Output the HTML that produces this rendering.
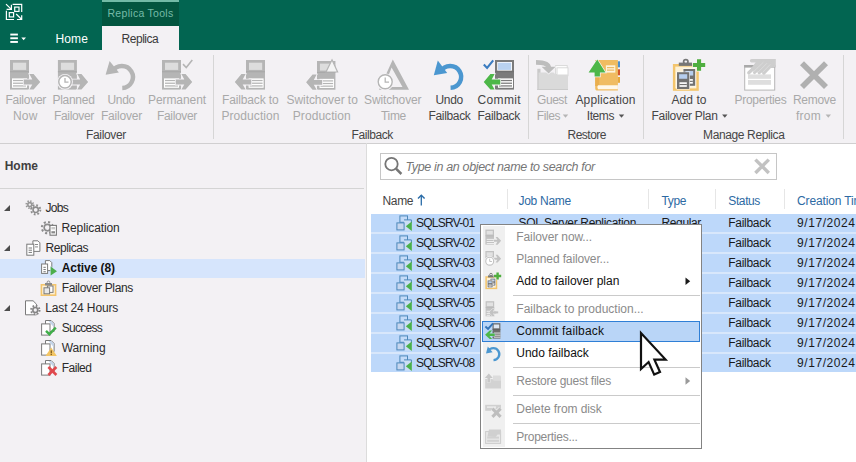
<!DOCTYPE html>
<html><head><meta charset="utf-8"><title>Replicas</title>
<style>
html,body{margin:0;padding:0}
body{width:856px;height:462px;overflow:hidden;position:relative;background:#fff;font-family:"Liberation Sans",sans-serif}
.t{position:absolute;white-space:pre;line-height:16px;height:16px}
.a{position:absolute}
svg{position:absolute;overflow:visible}
</style></head><body>
<!-- top bar -->
<div class="a" style="left:0;top:0;width:856px;height:50px;background:#026551"></div>
<div class="a" style="left:102px;top:0;width:77px;height:26px;background:#03553f"></div>
<div class="a" style="left:102px;top:0;width:77px;height:2px;background:#73baa6"></div>
<div class="a" style="left:102px;top:26px;width:77px;height:24px;background:#f3f1f4"></div>
<!-- ribbon -->
<div class="a" style="left:0;top:50px;width:856px;height:93px;background:#f3f1f4"></div>
<div class="a" style="left:0;top:143px;width:856px;height:1px;background:#d0cfd0"></div>
<div class="a" style="left:213px;top:55px;width:1px;height:84px;background:#d6d6d6"></div>
<div class="a" style="left:528px;top:55px;width:1px;height:84px;background:#d6d6d6"></div>
<div class="a" style="left:643px;top:55px;width:1px;height:84px;background:#d6d6d6"></div>
<div class="a" style="left:843px;top:55px;width:1px;height:84px;background:#d6d6d6"></div>
<!-- left panel -->
<div class="a" style="left:0;top:144px;width:366px;height:318px;background:#f3f1f4"></div>
<div class="a" style="left:366px;top:143px;width:1px;height:319px;background:#dcdcdc"></div>
<div class="a" style="left:0;top:188px;width:364px;height:1px;background:#d4d4d4"></div>
<div class="a" style="left:0;top:258.5px;width:365px;height:19px;background:#d6e5fc"></div>
<!-- search -->
<div class="a" style="left:380px;top:153px;width:397px;height:27px;border:1px solid #c6c6c6;box-sizing:border-box;background:#fff"></div>
<!-- header seps -->
<div class="a" style="left:507px;top:189px;width:1px;height:20px;background:#e6e6e6"></div>
<div class="a" style="left:648px;top:189px;width:1px;height:20px;background:#e6e6e6"></div>
<div class="a" style="left:715px;top:189px;width:1px;height:20px;background:#e6e6e6"></div>
<div class="a" style="left:784px;top:189px;width:1px;height:20px;background:#e6e6e6"></div>
<!-- rows -->
<div class="a" style="left:371px;top:213.6px;width:485px;height:158.7px;background:#d8e7fb"></div>
<div class="a" style="left:371px;top:213.6px;width:485px;height:18.7px;background:#bdd8fa"></div>
<div class="a" style="left:371px;top:233.6px;width:485px;height:18.7px;background:#bdd8fa"></div>
<div class="a" style="left:371px;top:253.6px;width:485px;height:18.7px;background:#bdd8fa"></div>
<div class="a" style="left:371px;top:273.6px;width:485px;height:18.7px;background:#bdd8fa"></div>
<div class="a" style="left:371px;top:293.6px;width:485px;height:18.7px;background:#bdd8fa"></div>
<div class="a" style="left:371px;top:313.6px;width:485px;height:18.7px;background:#bdd8fa"></div>
<div class="a" style="left:371px;top:333.6px;width:485px;height:18.7px;background:#bdd8fa"></div>
<div class="a" style="left:371px;top:353.6px;width:485px;height:18.7px;background:#bdd8fa"></div>

<!-- menu -->
<div class="a" style="left:480px;top:224px;width:222px;height:225px;background:#ffffff;border:1px solid #838383;box-sizing:border-box;z-index:10"></div>
<div class="a" style="left:483px;top:226px;width:22px;height:221px;background:#f0f0f0;z-index:11"></div>
<div class="a" style="left:513px;top:295px;width:187px;height:1px;background:#cacaca;z-index:12"></div>
<div class="a" style="left:513px;top:367px;width:187px;height:1px;background:#cacaca;z-index:12"></div>
<div class="a" style="left:513px;top:395px;width:187px;height:1px;background:#cacaca;z-index:12"></div>
<div class="a" style="left:513px;top:423px;width:187px;height:1px;background:#cacaca;z-index:12"></div>
<div class="a" style="left:482px;top:320.5px;width:218px;height:21.5px;background:#b9d5f7;border:1px solid #2f7fd6;box-sizing:border-box;z-index:13"></div>
<svg width="856" height="462" style="left:0;top:0;z-index:5" viewBox="0 0 856 462"><path d="M6 4.1 L11.4 9.4 M6.6 9.4 L11.4 9.4 L11.4 4.8" stroke="#ffffff" stroke-width="1.2" fill="none"/>
<path d="M12.6 4.4 L21.7 4.4 L21.7 12" stroke="#ffffff" stroke-width="1.2" fill="none"/>
<rect x="14.7" y="7.1" width="4.3" height="4.3" stroke="#ffffff" stroke-width="1.2" fill="none"/>
<rect x="9.3" y="12.6" width="4.3" height="4.3" stroke="#ffffff" stroke-width="1.2" fill="none"/>
<path d="M6.4 10.8 L6.4 19.5 L14 19.5" stroke="#ffffff" stroke-width="1.2" fill="none"/>
<path d="M16.2 14 L21.7 19.5 M21.7 15.2 L21.7 19.5 L16.9 19.5" stroke="#ffffff" stroke-width="1.2" fill="none"/>
<rect x="10.3" y="33.6" width="7.6" height="1.9" fill="#ffffff" />
<rect x="10.3" y="37.3" width="7.6" height="1.9" fill="#ffffff" />
<rect x="10.3" y="41" width="7.6" height="1.9" fill="#ffffff" />
<polygon points="21.3,37.4 26,37.4 23.65,40.2" fill="#ffffff" /><rect x="10" y="60" width="19" height="29.6" fill="#b5b5b5" /><rect x="13" y="62.7" width="13.2" height="7.2" fill="#dddddd" /><rect x="10" y="71.3" width="19" height="0.9" fill="#a6a6a6" /><rect x="12" y="78.4" width="15" height="9.4" fill="#ffffff" /><rect x="13" y="79.9" width="13" height="1.25" fill="#b5b5b5" /><rect x="13" y="82.6" width="13" height="1.25" fill="#b5b5b5" /><rect x="13" y="85.3" width="13" height="1.25" fill="#b5b5b5" />
<polygon points="23.75,79.6 32.3,79.6 29.4,74 33.6,74 40.25,81.9 33.6,89.6 29.4,89.6 32.3,84.6 23.75,84.6" fill="#b5b5b5" stroke="#f5f3f6" stroke-width="1.6" paint-order="stroke"/>
<rect x="57.9" y="60" width="19" height="29.6" fill="#b5b5b5" /><rect x="60.9" y="62.7" width="13.2" height="7.2" fill="#dddddd" /><rect x="57.9" y="71.3" width="19" height="0.9" fill="#a6a6a6" />
<polygon points="71.65,79.6 80.2,79.6 77.3,74 81.5,74 88.15,81.9 81.5,89.6 77.3,89.6 80.2,84.6 71.65,84.6" fill="#b5b5b5" stroke="#f5f3f6" stroke-width="1.6" paint-order="stroke"/>
<circle cx="65" cy="81.8" r="7.9" fill="#f5f3f6" /><circle cx="65" cy="81.8" r="6.25" fill="#ffffff" stroke="#b5b5b5" stroke-width="1.5"/><polyline points="65,77.95 65,82.1 68.5,82.1" fill="none" stroke="#b5b5b5" stroke-width="1.35"/>
<path d="M112.37 71.5 A11 11 0 1 1 122.28 87.99" fill="none" stroke="#b5b5b5" stroke-width="4.5"/><polygon points="105.6,74.8 109.6,60.9 118.9,72.6" fill="#b5b5b5" />
<rect x="162" y="60" width="19" height="29.6" fill="#b5b5b5" /><rect x="165" y="62.7" width="13.2" height="7.2" fill="#dddddd" /><rect x="162" y="71.3" width="19" height="0.9" fill="#a6a6a6" /><rect x="164" y="78.4" width="15" height="9.4" fill="#ffffff" /><rect x="165" y="79.9" width="13" height="1.25" fill="#b5b5b5" /><rect x="165" y="82.6" width="13" height="1.25" fill="#b5b5b5" /><rect x="165" y="85.3" width="13" height="1.25" fill="#b5b5b5" />
<polygon points="175.75,79.6 184.3,79.6 181.4,74 185.6,74 192.25,81.9 185.6,89.6 181.4,89.6 184.3,84.6 175.75,84.6" fill="#b5b5b5" stroke="#f5f3f6" stroke-width="1.6" paint-order="stroke"/>
<polyline points="183,64.12 186.25,67.5 192.3,60" fill="none" stroke="#b5b5b5" stroke-width="1.6"/>
<rect x="246" y="60" width="19" height="29.6" fill="#b5b5b5" /><rect x="249" y="62.7" width="13.2" height="7.2" fill="#dddddd" /><rect x="246" y="71.3" width="19" height="0.9" fill="#a6a6a6" /><rect x="248.6" y="78.4" width="15" height="9.4" fill="#ffffff" /><rect x="249.6" y="79.9" width="13" height="1.25" fill="#b5b5b5" /><rect x="249.6" y="82.6" width="13" height="1.25" fill="#b5b5b5" /><rect x="249.6" y="85.3" width="13" height="1.25" fill="#b5b5b5" />
<polygon points="251.25,79.6 242.7,79.6 245.6,74 241.4,74 234.75,81.9 241.4,89.6 245.6,89.6 242.7,84.6 251.25,84.6" fill="#b5b5b5" stroke="#f5f3f6" stroke-width="1.6" paint-order="stroke"/>
<rect x="317" y="61" width="18.43" height="28.71" fill="#b5b5b5" /><rect x="319.91" y="63.62" width="12.8" height="6.98" fill="#dddddd" /><rect x="317" y="71.96" width="18.43" height="0.87" fill="#a6a6a6" /><rect x="319.52" y="78.85" width="14.55" height="9.12" fill="#ffffff" /><rect x="320.49" y="80.3" width="12.61" height="1.21" fill="#b5b5b5" /><rect x="320.49" y="82.92" width="12.61" height="1.21" fill="#b5b5b5" /><rect x="320.49" y="85.54" width="12.61" height="1.21" fill="#b5b5b5" />
<polygon points="322.09,80.01 313.8,80.01 316.61,74.58 312.54,74.58 306.09,82.24 312.54,89.71 316.61,89.71 313.8,84.86 322.09,84.86" fill="#b5b5b5" stroke="#f5f3f6" stroke-width="1.55" paint-order="stroke"/>
<polygon points="332,59.8 337.6,72 326,72" fill="#f4f4f4" stroke="#b5b5b5" stroke-width="1.2"/>
<path d="M392.8 59.6 L409 89.8 L379 89.8 Z M391.6 67.5 L384 87 L402.5 87 Z" fill="#b5b5b5" fill-rule="evenodd"/>
<circle cx="385.2" cy="81.8" r="8.6" fill="#f5f3f6" /><circle cx="385.2" cy="81.8" r="7" fill="#ffffff" stroke="#b5b5b5" stroke-width="1.4"/><polyline points="385.2,77.56 385.2,82.1 389.05,82.1" fill="none" stroke="#b5b5b5" stroke-width="1.26"/>
<path d="M440.76 71.45 A10.9 10.9 0 1 1 450.58 87.79" fill="none" stroke="#4b97d0" stroke-width="4.5"/><polygon points="433.8,75.2 437.8,60.4 447.2,73" fill="#4b97d0" />
<rect x="495" y="60" width="19" height="29.6" fill="#7b7b7b" /><rect x="497.2" y="62" width="14.8" height="8.6" fill="#ffffff" /><rect x="498" y="62.7" width="13.2" height="7.2" fill="#b9d2f0" /><rect x="495" y="71.3" width="19" height="0.9" fill="#6d6d6d" /><rect x="498" y="78.4" width="15" height="9.4" fill="#ffffff" /><rect x="499" y="79.9" width="13" height="1.25" fill="#7b7b7b" /><rect x="499" y="82.6" width="13" height="1.25" fill="#7b7b7b" /><rect x="499" y="85.3" width="13" height="1.25" fill="#7b7b7b" />
<polygon points="500.25,79.6 491.7,79.6 494.6,74 490.4,74 483.75,81.9 490.4,89.6 494.6,89.6 491.7,84.6 500.25,84.6" fill="#4db748" stroke="#f5f3f6" stroke-width="1.6" paint-order="stroke"/>
<polyline points="483.8,64.58 487.09,68 493.2,60.4" fill="none" stroke="#3b7cc0" stroke-width="2.1"/>
<rect x="555.6" y="65.6" width="11.6" height="9" fill="#ffffff" stroke="#d6d6d6" stroke-width="0.9"/>
<rect x="557" y="67.8" width="11" height="8" fill="#ffffff" stroke="#d6d6d6" stroke-width="0.9"/>
<rect x="537.3" y="68.8" width="3.2" height="21.2" fill="#c9c9c9" />
<path d="M538.6 72.6 L553.5 72.6 L555.5 74.4 L568 74.4 L568 90 L538.6 90 Z" fill="#dadada" />
<rect x="537.3" y="89" width="30.7" height="1" fill="#cbcbcb" />
<path d="M536 62.4 C545 62.4 548.7 64.6 548.7 69" fill="none" stroke="#f5f3f6" stroke-width="6.4"/>
<polygon points="541.6,66.8 555.6,66.8 548.6,73.6" fill="#bdbdbd" stroke="#f5f3f6" stroke-width="1.2" paint-order="stroke"/>
<path d="M536 62.4 C545 62.4 548.7 64.6 548.7 68" fill="none" stroke="#bdbdbd" stroke-width="4.8"/>
<rect x="617.4" y="61.3" width="2.6" height="6" fill="#4a90d0" />
<rect x="617.4" y="69.3" width="2.6" height="6" fill="#d4572a" />
<rect x="617.4" y="77" width="2.6" height="5.8" fill="#e7a93c" />
<path d="M598 60 L617.9 60 L617.9 90.6 L597.5 90.6 Q595.2 90.6 595.2 88 L595.2 62.5 Q595.2 60 598 60 Z" fill="#f0bc62" />
<rect x="595.2" y="60" width="4" height="26" fill="#e9ae4e" />
<path d="M598 85.3 L617.9 85.3 L617.9 89.3 L598 89.3 Q596.4 87.3 598 85.3 Z" fill="#fff8ea" />
<rect x="605.9" y="65.3" width="9.4" height="7.3" fill="#fdf3dc" />
<rect x="607" y="67.2" width="7.2" height="1" fill="#e9ae4e" />
<rect x="607" y="69.6" width="7.2" height="1" fill="#e9ae4e" />
<polygon points="597.25,59.6 605.5,72.6 599.9,72.6 599.9,76.6 594.6,76.6 594.6,72.6 588.6,72.6" fill="#4db748" stroke="#f5f3f6" stroke-width="1.5" paint-order="stroke"/>
<rect x="672.9" y="64" width="25.9" height="26.8" fill="#f3c56d" />
<rect x="675.3" y="66.6" width="21.1" height="21.8" fill="#fdf1d6" />
<circle cx="685.8" cy="61.8" r="2.2" fill="none" stroke="#777" stroke-width="1.7"/>
<rect x="678.8" y="62.6" width="13.2" height="3.3" fill="#777" />
<rect x="683.4" y="69" width="11.8" height="16.8" fill="#727272" stroke="#ffffff" stroke-width="1" paint-order="stroke"/><rect x="685.41" y="71.02" width="7.79" height="4.54" fill="#b6ceee" /><rect x="685.76" y="79.08" width="7.08" height="4.54" fill="#ffffff" /><rect x="685.76" y="80.76" width="7.08" height="1.18" fill="#727272" />
<rect x="677" y="72.2" width="12.3" height="16.8" fill="#727272" stroke="#ffffff" stroke-width="1" paint-order="stroke"/><rect x="679.09" y="74.22" width="8.12" height="4.54" fill="#b6ceee" /><rect x="679.46" y="82.28" width="7.38" height="4.54" fill="#ffffff" /><rect x="679.46" y="83.96" width="7.38" height="1.18" fill="#727272" />
<polygon points="697,59.3 701.1,59.3 701.1,63 705.2,63 705.2,67.1 701.1,67.1 701.1,70.8 697,70.8 697,67.1 692.9,67.1 692.9,63 697,63" fill="#4fae3f" stroke="#f5f3f6" stroke-width="1.4" paint-order="stroke"/>
<rect x="744.7" y="65.5" width="30" height="24.6" fill="#ffffff" stroke="#b6b6b6" stroke-width="1"/>
<rect x="744.2" y="65" width="31" height="2.6" fill="#a9a9a9" />
<rect x="748" y="74.4" width="23" height="4.4" fill="#dedede" />
<rect x="748" y="80" width="23" height="4.8" fill="#dedede" />
<path d="M758 59.1 L775.8 59.1 L775.8 67.2 L769.5 67.2 L764 73 L750 70 Z" fill="#cecece" />
<line x1="751.6" y1="60.8" x2="770" y2="60.8" stroke="#cecece" stroke-width="3.4" stroke-linecap="round"/>
<line x1="761" y1="61.5" x2="748.8" y2="72.8" stroke="#cecece" stroke-width="3.3" stroke-linecap="round"/>
<line x1="765" y1="62.6" x2="754.6" y2="72.4" stroke="#cecece" stroke-width="3.3" stroke-linecap="round"/>
<line x1="768.4" y1="63.6" x2="759.2" y2="72.6" stroke="#cecece" stroke-width="3.3" stroke-linecap="round"/>
<line x1="771.4" y1="65" x2="763.8" y2="73" stroke="#cecece" stroke-width="3.3" stroke-linecap="round"/>
<line x1="763.4" y1="62.2" x2="753" y2="72.2" stroke="#dedede" stroke-width="0.8" />
<line x1="767" y1="63.2" x2="758" y2="72.2" stroke="#dedede" stroke-width="0.8" />
<line x1="770.2" y1="64.4" x2="762.6" y2="72.4" stroke="#dedede" stroke-width="0.8" />
<line x1="802" y1="63.2" x2="826" y2="87" stroke="#b0b0b0" stroke-width="5.6" />
<line x1="826" y1="63.2" x2="802" y2="87" stroke="#b0b0b0" stroke-width="5.6" />
<polygon points="562.8,114.5 568.2,114.5 565.5,117.7" fill="#b5b5b5" />
<polygon points="618.8,114.5 624.2,114.5 621.5,117.7" fill="#555" />
<polygon points="722.1,114.5 727.5,114.5 724.8,117.7" fill="#555" />
<polygon points="825.6,114.5 831,114.5 828.3,117.7" fill="#b5b5b5" /><polygon points="10,205 10,211 4,211" fill="#4c4c4c" />
<polygon points="10,245 10,251 4,251" fill="#4c4c4c" />
<polygon points="10,305 10,311 4,311" fill="#4c4c4c" />
<circle cx="29.8" cy="204.6" r="3.4" fill="none" stroke="#969696" stroke-width="2" stroke-dasharray="1.28 1.39"/><circle cx="29.8" cy="204.6" r="1.97" fill="none" stroke="#969696" stroke-width="1.6"/>
<circle cx="35.7" cy="209.8" r="4.6" fill="none" stroke="#8c8c8c" stroke-width="2" stroke-dasharray="1.73 1.88"/><circle cx="35.7" cy="209.8" r="2.67" fill="none" stroke="#8c8c8c" stroke-width="1.6"/>
<circle cx="47.4" cy="227.6" r="5.6" fill="none" stroke="#8c8c8c" stroke-width="2" stroke-dasharray="2.11 2.29"/><circle cx="47.4" cy="227.6" r="3.25" fill="none" stroke="#8c8c8c" stroke-width="1.6"/>
<rect x="50" y="225.4" width="6.4" height="9.8" fill="#ffffff" stroke="#7a7a7a" stroke-width="1.1"/>
<rect x="51.4" y="227" width="3.6" height="2.4" fill="#c9c9c9" />
<rect x="51.4" y="231.2" width="3.6" height="2.2" fill="#8a8a8a" />
<path d="M32.9 240.8 L37.9 240.8 L39.9 242.8 L39.9 251.4 L32.9 251.4 Z" fill="#ffffff" stroke="#7a7a7a" stroke-width="1"/>
<rect x="35" y="244" width="3" height="1" fill="#8a8a8a" />
<rect x="35" y="246.4" width="3" height="1" fill="#8a8a8a" />
<rect x="26.8" y="244.2" width="7" height="11" fill="#ffffff" stroke="#7a7a7a" stroke-width="1"/><rect x="28.6" y="247.5" width="3.4" height="1" fill="#7a7a7a" /><rect x="28.6" y="249.7" width="3.4" height="1" fill="#7a7a7a" /><rect x="28.6" y="251.9" width="3.4" height="1" fill="#7a7a7a" />
<path d="M45.4 260.6 L49.8 260.6 L51.8 262.6 L51.8 270.6 L45.4 270.6 Z" fill="#ffffff" stroke="#7a7a7a" stroke-width="1"/>
<rect x="41.6" y="264" width="6" height="9.4" fill="#ffffff" stroke="#7a7a7a" stroke-width="1"/><rect x="43.4" y="266.82" width="2.4" height="1" fill="#7a7a7a" /><rect x="43.4" y="269.02" width="2.4" height="1" fill="#7a7a7a" /><rect x="43.4" y="271.22" width="2.4" height="1" fill="#7a7a7a" />
<polygon points="50.6,266.6 57,271.2 50.6,275.6" fill="#4cae4c" stroke="#d6e5fc" stroke-width="0.8" paint-order="stroke"/>
<rect x="41.4" y="284.8" width="14.2" height="10.4" fill="#fdf1d8" stroke="#f3c56d" stroke-width="1.6"/>
<rect x="45" y="283" width="7" height="2.4" fill="#8a8a8a" />
<circle cx="48.5" cy="282.4" r="1.4" fill="none" stroke="#8a8a8a" stroke-width="1"/>
<rect x="47.4" y="286" width="5.6" height="6.4" fill="#ffffff" stroke="#7a7a7a" stroke-width="1"/>
<rect x="44" y="287.8" width="5.6" height="6" fill="#e8e8e8" stroke="#7a7a7a" stroke-width="1"/>
<path d="M25.5 300.8 L33.1 300.8 L36.5 304.2 L36.5 314.8 L25.5 314.8 Z" fill="#ffffff" stroke="#7a7a7a" stroke-width="1"/>
<circle cx="35.3" cy="310" r="4.6" fill="#f3f1f4" />
<circle cx="35.3" cy="310" r="4.2" fill="none" stroke="#858585" stroke-width="2" stroke-dasharray="1.58 1.72"/><circle cx="35.3" cy="310" r="2.44" fill="none" stroke="#858585" stroke-width="1.6"/>
<path d="M45.5 320.5 L51.1 320.5 L54.1 323.5 L54.1 331.5 L45.5 331.5 Z" fill="#ffffff" stroke="#7a7a7a" stroke-width="1"/>
<polygon points="48.5,321 51.2,321 53.6,323.5 53.6,327" fill="#c3d5ea" />
<rect x="41.6" y="323.9" width="8.4" height="11.2" fill="#ffffff" stroke="#7a7a7a" stroke-width="1"/>
<path d="M45.5 340.5 L51.1 340.5 L54.1 343.5 L54.1 351.5 L45.5 351.5 Z" fill="#ffffff" stroke="#7a7a7a" stroke-width="1"/>
<polygon points="48.5,341 51.2,341 53.6,343.5 53.6,347" fill="#c3d5ea" />
<rect x="41.6" y="343.9" width="8.4" height="11.2" fill="#ffffff" stroke="#7a7a7a" stroke-width="1"/>
<path d="M45.5 360.5 L51.1 360.5 L54.1 363.5 L54.1 371.5 L45.5 371.5 Z" fill="#ffffff" stroke="#7a7a7a" stroke-width="1"/>
<polygon points="48.5,361 51.2,361 53.6,363.5 53.6,367" fill="#c3d5ea" />
<rect x="41.6" y="363.9" width="8.4" height="11.2" fill="#ffffff" stroke="#7a7a7a" stroke-width="1"/>
<polyline points="46,330.8 49.4,334.2 55.8,327.6" fill="none" stroke="#3fae49" stroke-width="2.4"/>
<polygon points="51.2,347.6 56.9,356 45.5,356" fill="#f2c565" />
<rect x="50.7" y="350.4" width="1.1" height="3" fill="#6b4a10" />
<rect x="50.7" y="354" width="1.1" height="1.1" fill="#6b4a10" />
<line x1="48.4" y1="367" x2="56.4" y2="375" stroke="#e0484d" stroke-width="2.5" />
<line x1="56.4" y1="367" x2="48.4" y2="375" stroke="#e0484d" stroke-width="2.5" /><circle cx="391.5" cy="164.1" r="6.2" fill="none" stroke="#767676" stroke-width="1.8"/>
<line x1="396" y1="168.7" x2="401.4" y2="174" stroke="#767676" stroke-width="2.5" />
<line x1="755.4" y1="159.6" x2="768.8" y2="173" stroke="#c2c2c2" stroke-width="3.4" />
<line x1="768.8" y1="159.6" x2="755.4" y2="173" stroke="#c2c2c2" stroke-width="3.4" />
<line x1="421.3" y1="195.6" x2="421.3" y2="205.5" stroke="#2a6ca8" stroke-width="1.3" />
<polyline points="418,198.6 421.3,195.2 424.6,198.6" fill="none" stroke="#2a6ca8" stroke-width="1.4"/>
<rect x="399.9" y="215.9" width="7.6" height="6.4" fill="#c4dbf8" stroke="#4d88ba" stroke-width="1"/>
<rect x="404" y="219.9" width="7.6" height="10.6" fill="#cbdef5" />
<path d="M404 219.9 L411.4 219.9 L411.4 223" fill="none" stroke="#4d88ba" stroke-width="1"/>
<rect x="396.9" y="222.9" width="7.2" height="7" fill="#c6d6ee" stroke="#4d88ba" stroke-width="1"/>
<polygon points="411.8,221.4 411.8,230.9 405.8,226.2" fill="#4bb04a" />
<rect x="399.9" y="235.9" width="7.6" height="6.4" fill="#c4dbf8" stroke="#4d88ba" stroke-width="1"/>
<rect x="404" y="239.9" width="7.6" height="10.6" fill="#cbdef5" />
<path d="M404 239.9 L411.4 239.9 L411.4 243" fill="none" stroke="#4d88ba" stroke-width="1"/>
<rect x="396.9" y="242.9" width="7.2" height="7" fill="#c6d6ee" stroke="#4d88ba" stroke-width="1"/>
<polygon points="411.8,241.4 411.8,250.9 405.8,246.2" fill="#4bb04a" />
<rect x="399.9" y="255.9" width="7.6" height="6.4" fill="#c4dbf8" stroke="#4d88ba" stroke-width="1"/>
<rect x="404" y="259.9" width="7.6" height="10.6" fill="#cbdef5" />
<path d="M404 259.9 L411.4 259.9 L411.4 263" fill="none" stroke="#4d88ba" stroke-width="1"/>
<rect x="396.9" y="262.9" width="7.2" height="7" fill="#c6d6ee" stroke="#4d88ba" stroke-width="1"/>
<polygon points="411.8,261.4 411.8,270.9 405.8,266.2" fill="#4bb04a" />
<rect x="399.9" y="275.9" width="7.6" height="6.4" fill="#c4dbf8" stroke="#4d88ba" stroke-width="1"/>
<rect x="404" y="279.9" width="7.6" height="10.6" fill="#cbdef5" />
<path d="M404 279.9 L411.4 279.9 L411.4 283" fill="none" stroke="#4d88ba" stroke-width="1"/>
<rect x="396.9" y="282.9" width="7.2" height="7" fill="#c6d6ee" stroke="#4d88ba" stroke-width="1"/>
<polygon points="411.8,281.4 411.8,290.9 405.8,286.2" fill="#4bb04a" />
<rect x="399.9" y="295.9" width="7.6" height="6.4" fill="#c4dbf8" stroke="#4d88ba" stroke-width="1"/>
<rect x="404" y="299.9" width="7.6" height="10.6" fill="#cbdef5" />
<path d="M404 299.9 L411.4 299.9 L411.4 303" fill="none" stroke="#4d88ba" stroke-width="1"/>
<rect x="396.9" y="302.9" width="7.2" height="7" fill="#c6d6ee" stroke="#4d88ba" stroke-width="1"/>
<polygon points="411.8,301.4 411.8,310.9 405.8,306.2" fill="#4bb04a" />
<rect x="399.9" y="315.9" width="7.6" height="6.4" fill="#c4dbf8" stroke="#4d88ba" stroke-width="1"/>
<rect x="404" y="319.9" width="7.6" height="10.6" fill="#cbdef5" />
<path d="M404 319.9 L411.4 319.9 L411.4 323" fill="none" stroke="#4d88ba" stroke-width="1"/>
<rect x="396.9" y="322.9" width="7.2" height="7" fill="#c6d6ee" stroke="#4d88ba" stroke-width="1"/>
<polygon points="411.8,321.4 411.8,330.9 405.8,326.2" fill="#4bb04a" />
<rect x="399.9" y="335.9" width="7.6" height="6.4" fill="#c4dbf8" stroke="#4d88ba" stroke-width="1"/>
<rect x="404" y="339.9" width="7.6" height="10.6" fill="#cbdef5" />
<path d="M404 339.9 L411.4 339.9 L411.4 343" fill="none" stroke="#4d88ba" stroke-width="1"/>
<rect x="396.9" y="342.9" width="7.2" height="7" fill="#c6d6ee" stroke="#4d88ba" stroke-width="1"/>
<polygon points="411.8,341.4 411.8,350.9 405.8,346.2" fill="#4bb04a" />
<rect x="399.9" y="355.9" width="7.6" height="6.4" fill="#c4dbf8" stroke="#4d88ba" stroke-width="1"/>
<rect x="404" y="359.9" width="7.6" height="10.6" fill="#cbdef5" />
<path d="M404 359.9 L411.4 359.9 L411.4 363" fill="none" stroke="#4d88ba" stroke-width="1"/>
<rect x="396.9" y="362.9" width="7.2" height="7" fill="#c6d6ee" stroke="#4d88ba" stroke-width="1"/>
<polygon points="411.8,361.4 411.8,370.9 405.8,366.2" fill="#4bb04a" /></svg>
<svg width="856" height="462" style="left:0;top:0;z-index:15" viewBox="0 0 856 462"><rect x="485.4" y="229.6" width="8.6" height="15" fill="#c2c2c2" /><rect x="486.6" y="230.9" width="6.2" height="3.6" fill="#e2e2e2" /><rect x="485.4" y="235.5" width="8.6" height="0.7" fill="#b6b6b6" /><rect x="486.7" y="238.9" width="7.3" height="0.9" fill="#f4f4f4" /><rect x="486.7" y="241" width="7.3" height="0.9" fill="#f4f4f4" /><rect x="486.7" y="243" width="7.3" height="0.9" fill="#f4f4f4" />
<polygon points="494,239.8 497.4,239.8 495.6,236.9 497.6,236.9 501.1,240.8 497.6,244.7 495.6,244.7 497.4,241.8 494,241.8" fill="#c2c2c2" stroke="#f0f0f0" stroke-width="0.9" paint-order="stroke"/>
<rect x="485.4" y="251" width="8.6" height="11.5" fill="#c2c2c2" /><rect x="486.6" y="252.3" width="6.2" height="3.6" fill="#e2e2e2" /><rect x="485.4" y="256.9" width="8.6" height="0.7" fill="#b6b6b6" />
<polygon points="494,257.7 497.4,257.7 495.6,254.8 497.6,254.8 501.1,258.7 497.6,262.6 495.6,262.6 497.4,259.7 494,259.7" fill="#c2c2c2" stroke="#f0f0f0" stroke-width="0.9" paint-order="stroke"/>
<circle cx="489.7" cy="261.2" r="5.4" fill="#f0f0f0" /><circle cx="489.7" cy="261.2" r="3.95" fill="#ffffff" stroke="#c2c2c2" stroke-width="1.1"/><polyline points="489.7,258.72 489.7,261.5 491.95,261.5" fill="none" stroke="#c2c2c2" stroke-width="0.99"/>
<rect x="486.1" y="277" width="10.4" height="11.4" fill="#fdf1d6" stroke="#f3c56d" stroke-width="1.5"/>
<rect x="488" y="275.4" width="6.2" height="2" fill="#777" />
<circle cx="491" cy="274.6" r="1.3" fill="none" stroke="#777" stroke-width="0.9"/>
<rect x="490.4" y="278.6" width="5" height="7" fill="#727272" stroke="#ffffff" stroke-width="1" paint-order="stroke"/><rect x="491.25" y="279.44" width="3.3" height="1.89" fill="#b6ceee" /><rect x="491.4" y="282.8" width="3" height="1.89" fill="#ffffff" /><rect x="491.4" y="283.5" width="3" height="0.49" fill="#727272" />
<rect x="487.6" y="280.4" width="5" height="7" fill="#727272" stroke="#ffffff" stroke-width="1" paint-order="stroke"/><rect x="488.45" y="281.24" width="3.3" height="1.89" fill="#b6ceee" /><rect x="488.6" y="284.6" width="3" height="1.89" fill="#ffffff" /><rect x="488.6" y="285.3" width="3" height="0.49" fill="#727272" />
<polygon points="496.4,272.4 498.8,272.4 498.8,274.8 501.2,274.8 501.2,277.2 498.8,277.2 498.8,279.6 496.4,279.6 496.4,277.2 494,277.2 494,274.8 496.4,274.8" fill="#4fae3f" stroke="#f0f0f0" stroke-width="0.8" paint-order="stroke"/>
<rect x="485.6" y="301.2" width="8.6" height="15.1" fill="#c2c2c2" /><rect x="486.8" y="302.5" width="6.2" height="3.6" fill="#e2e2e2" /><rect x="485.6" y="307.1" width="8.6" height="0.7" fill="#b6b6b6" />
<rect x="486.6" y="310.8" width="3.4" height="0.9" fill="#f4f4f4" />
<rect x="486.6" y="312.9" width="3.4" height="0.9" fill="#f4f4f4" />
<rect x="486.6" y="314.8" width="3.4" height="0.9" fill="#f4f4f4" />
<polygon points="496.3,311.4 492.9,311.4 494.7,308.5 492.7,308.5 489.2,312.4 492.7,316.3 494.7,316.3 492.9,313.4 496.3,313.4" fill="#c2c2c2" stroke="#f0f0f0" stroke-width="0.9" paint-order="stroke"/>
<rect x="494" y="311.4" width="4.2" height="2" fill="#c2c2c2" />
<rect x="492.5" y="323.2" width="7.9" height="15.4" fill="#6e6e6e" />
<rect x="493.7" y="324.5" width="5.5" height="3.8" fill="#dce6f3" />
<rect x="492.5" y="329.4" width="7.9" height="0.7" fill="#5c5c5c" />
<rect x="494" y="332.6" width="6.4" height="0.9" fill="#f2f2f2" />
<rect x="494" y="334.7" width="6.4" height="0.9" fill="#f2f2f2" />
<rect x="494" y="336.7" width="6.4" height="0.9" fill="#f2f2f2" />
<polygon points="485.1,334.8 489.7,330.6 492.1,330.6 489.5,333.5 494.7,333.5 494.7,336.1 489.5,336.1 492.1,339 489.7,339" fill="#4db748" stroke="#b9d5f7" stroke-width="0.8" paint-order="stroke"/>
<polyline points="485.4,326.48 488.06,329 493,323.4" fill="none" stroke="#3474b7" stroke-width="1.9"/>
<path d="M488.1 351.2 A6 6 0 1 1 493.51 360.2" fill="none" stroke="#4b97d0" stroke-width="2.3"/><polygon points="486,353.6 487.8,346.4 492.6,352.2" fill="#4b97d0" />
<path d="M493 375.6 L500.4 375.6 L501 376.4 L501 380 L493 380 Z" fill="#dcdcdc" />
<path d="M485.2 379 L492.4 379 L493.6 380.2 L501 380.2 L501 388.6 L485.2 388.6 Z" fill="#d2d2d2" />
<polygon points="488.8,373.4 492.8,378 490.2,378 490.2,382.4 487.4,382.4 487.4,378 484.8,378" fill="#c8c8c8" stroke="#f0f0f0" stroke-width="0.9" paint-order="stroke"/>
<rect x="485.2" y="404.8" width="15.8" height="6" fill="#d0d0d0" />
<rect x="487" y="406.4" width="9" height="1.4" fill="#efefef" />
<line x1="492.4" y1="408.6" x2="500.6" y2="416.8" stroke="#f0f0f0" stroke-width="4.6" />
<line x1="500.6" y1="408.6" x2="492.4" y2="416.8" stroke="#f0f0f0" stroke-width="4.6" />
<line x1="492.4" y1="408.6" x2="500.6" y2="416.8" stroke="#bebebe" stroke-width="3.1" />
<line x1="500.6" y1="408.6" x2="492.4" y2="416.8" stroke="#bebebe" stroke-width="3.1" />
<rect x="485.6" y="431.6" width="15" height="11.8" fill="#e9e9e9" stroke="#cdcdcd" stroke-width="1"/>
<rect x="487.2" y="436.6" width="11.8" height="2" fill="#d2d2d2" />
<rect x="487.2" y="439.8" width="11.8" height="2" fill="#d2d2d2" />
<path d="M489 429.6 L501 429.6 L501 434.4 L497.6 434.4 L495.6 437 L487.4 436.6 Z" fill="#d0d0d0" />
<polygon points="685.5,277.5 685.5,285.1 690.2,281.3" fill="#1a1a1a" />
<polygon points="685.5,377.2 685.5,384.8 690.2,381" fill="#9a9a9a" />
<path d="M641 333 L641 369 L648.6 362 L654.2 374.6 L660 372 L654.4 359.6 L665.6 359.6 Z" fill="#ffffff" stroke="#111" stroke-width="2.2" stroke-linejoin="miter"/></svg>
<span class="t" style="left:107.5px;top:5.1px;font-size:10.5px;color:#76bba8;letter-spacing:0.29px;">Replica Tools</span>
<span class="t" style="left:55.5px;top:31.0px;font-size:12px;color:#ffffff;letter-spacing:0.12px;">Home</span>
<span class="t" style="left:121.5px;top:31.0px;font-size:12px;color:#3a3a3a;letter-spacing:-0.46px;">Replica</span>
<span class="t" style="left:5.5px;top:92.0px;font-size:12px;color:#a9a9a9;letter-spacing:-0.27px;">Failover</span>
<span class="t" style="left:13.0px;top:107.6px;font-size:12px;color:#a9a9a9;letter-spacing:0.16px;">Now</span>
<span class="t" style="left:52.5px;top:92.0px;font-size:12px;color:#a9a9a9;letter-spacing:-0.29px;">Planned</span>
<span class="t" style="left:54.0px;top:107.6px;font-size:12px;color:#a9a9a9;letter-spacing:-0.34px;">Failover</span>
<span class="t" style="left:107.5px;top:92.0px;font-size:12px;color:#a9a9a9;letter-spacing:-0.30px;">Undo</span>
<span class="t" style="left:101.0px;top:107.6px;font-size:12px;color:#a9a9a9;letter-spacing:-0.21px;">Failover</span>
<span class="t" style="left:148.0px;top:92.0px;font-size:12px;color:#a9a9a9;letter-spacing:-0.08px;">Permanent</span>
<span class="t" style="left:157.0px;top:107.6px;font-size:12px;color:#a9a9a9;letter-spacing:-0.34px;">Failover</span>
<span class="t" style="left:86.0px;top:127.0px;font-size:12px;color:#464646;letter-spacing:-0.34px;">Failover</span>
<span class="t" style="left:222.0px;top:92.0px;font-size:12px;color:#a9a9a9;letter-spacing:-0.14px;">Failback to</span>
<span class="t" style="left:221.5px;top:107.6px;font-size:12px;color:#a9a9a9;letter-spacing:0.06px;">Production</span>
<span class="t" style="left:286.5px;top:92.0px;font-size:12px;color:#a9a9a9;letter-spacing:-0.06px;">Switchover to</span>
<span class="t" style="left:292.8px;top:107.6px;font-size:12px;color:#a9a9a9;letter-spacing:0.06px;">Production</span>
<span class="t" style="left:364.0px;top:92.0px;font-size:12px;color:#a9a9a9;letter-spacing:-0.12px;">Switchover</span>
<span class="t" style="left:381.0px;top:107.6px;font-size:12px;color:#a9a9a9;letter-spacing:-0.31px;">Time</span>
<span class="t" style="left:351.5px;top:127.0px;font-size:12px;color:#464646;letter-spacing:-0.42px;">Failback</span>
<span class="t" style="left:435.5px;top:92.0px;font-size:12px;color:#464646;letter-spacing:-0.30px;">Undo</span>
<span class="t" style="left:428.5px;top:107.6px;font-size:12px;color:#464646;letter-spacing:-0.34px;">Failback</span>
<span class="t" style="left:477.5px;top:92.0px;font-size:12px;color:#464646;letter-spacing:0.36px;">Commit</span>
<span class="t" style="left:477.5px;top:107.6px;font-size:12px;color:#464646;letter-spacing:-0.27px;">Failback</span>
<span class="t" style="left:537.0px;top:92.0px;font-size:12px;color:#a9a9a9;letter-spacing:-0.44px;">Guest</span>
<span class="t" style="left:536.8px;top:107.6px;font-size:12px;color:#a9a9a9;letter-spacing:-0.43px;">Files</span>
<span class="t" style="left:575.5px;top:92.0px;font-size:12px;color:#464646;letter-spacing:0.12px;">Application</span>
<span class="t" style="left:586.8px;top:107.6px;font-size:12px;color:#464646;letter-spacing:-0.43px;">Items</span>
<span class="t" style="left:567.5px;top:127.0px;font-size:12px;color:#464646;letter-spacing:-0.50px;">Restore</span>
<span class="t" style="left:671.5px;top:92.0px;font-size:12px;color:#464646;letter-spacing:0.05px;">Add to</span>
<span class="t" style="left:651.5px;top:107.6px;font-size:12px;color:#464646;letter-spacing:-0.31px;">Failover Plan</span>
<span class="t" style="left:734.5px;top:92.0px;font-size:12px;color:#a9a9a9;letter-spacing:-0.27px;">Properties</span>
<span class="t" style="left:793.0px;top:92.0px;font-size:12px;color:#a9a9a9;letter-spacing:-0.31px;">Remove</span>
<span class="t" style="left:796.0px;top:107.6px;font-size:12px;color:#a9a9a9;letter-spacing:0.25px;">from</span>
<span class="t" style="left:703.0px;top:127.0px;font-size:12px;color:#464646;letter-spacing:-0.37px;">Manage Replica</span>
<span class="t" style="left:4.7px;top:157.8px;font-size:12px;color:#404040;letter-spacing:-0.01px;font-weight:700;">Home</span>
<span class="t" style="left:45.5px;top:199.8px;font-size:12px;color:#2b2b2b;letter-spacing:-0.71px;">Jobs</span>
<span class="t" style="left:61.5px;top:219.8px;font-size:12px;color:#2b2b2b;letter-spacing:-0.12px;">Replication</span>
<span class="t" style="left:45.5px;top:239.8px;font-size:12px;color:#2b2b2b;letter-spacing:-0.44px;">Replicas</span>
<span class="t" style="left:61.7px;top:259.8px;font-size:12px;color:#111;letter-spacing:-0.07px;font-weight:700;">Active (8)</span>
<span class="t" style="left:61.7px;top:279.8px;font-size:12px;color:#2b2b2b;letter-spacing:-0.34px;">Failover Plans</span>
<span class="t" style="left:45.2px;top:299.8px;font-size:12px;color:#2b2b2b;letter-spacing:-0.13px;">Last 24 Hours</span>
<span class="t" style="left:61.7px;top:319.8px;font-size:12px;color:#2b2b2b;letter-spacing:-0.72px;">Success</span>
<span class="t" style="left:61.7px;top:339.8px;font-size:12px;color:#2b2b2b;letter-spacing:-0.06px;">Warning</span>
<span class="t" style="left:61.7px;top:359.8px;font-size:12px;color:#2b2b2b;letter-spacing:-0.48px;">Failed</span>
<span class="t" style="left:405.5px;top:158.7px;font-size:12.5px;color:#767676;letter-spacing:-0.35px;font-style:italic;">Type in an object name to search for</span>
<span class="t" style="left:382.6px;top:192.6px;font-size:12px;color:#444;letter-spacing:-0.40px;">Name</span>
<span class="t" style="left:518.5px;top:192.6px;font-size:12px;color:#2d6aa3;letter-spacing:-0.28px;">Job Name</span>
<span class="t" style="left:661.5px;top:192.6px;font-size:12px;color:#2d6aa3;letter-spacing:-0.33px;">Type</span>
<span class="t" style="left:728.3px;top:192.6px;font-size:12px;color:#2d6aa3;letter-spacing:-0.39px;">Status</span>
<span class="t" style="left:797.0px;top:192.6px;font-size:12px;color:#2d6aa3;letter-spacing:-0.13px;">Creation Time</span>
<span class="t" style="left:416.0px;top:214.8px;font-size:12px;color:#1a1a1a;letter-spacing:-0.74px;">SQLSRV-01</span>
<span class="t" style="left:518.5px;top:214.8px;font-size:12px;color:#1a1a1a;letter-spacing:-0.34px;">SQL Server Replication</span>
<span class="t" style="left:661.5px;top:214.8px;font-size:12px;color:#1a1a1a;letter-spacing:-0.36px;">Regular</span>
<span class="t" style="left:728.3px;top:214.8px;font-size:12px;color:#1a1a1a;letter-spacing:-0.30px;">Failback</span>
<span class="t" style="left:797.0px;top:214.8px;font-size:12px;color:#1a1a1a;letter-spacing:0.58px;">9/17/2024</span>
<span class="t" style="left:416.0px;top:234.8px;font-size:12px;color:#1a1a1a;letter-spacing:-0.74px;">SQLSRV-02</span>
<span class="t" style="left:518.5px;top:234.8px;font-size:12px;color:#1a1a1a;letter-spacing:-0.34px;">SQL Server Replication</span>
<span class="t" style="left:661.5px;top:234.8px;font-size:12px;color:#1a1a1a;letter-spacing:-0.36px;">Regular</span>
<span class="t" style="left:728.3px;top:234.8px;font-size:12px;color:#1a1a1a;letter-spacing:-0.30px;">Failback</span>
<span class="t" style="left:797.0px;top:234.8px;font-size:12px;color:#1a1a1a;letter-spacing:0.58px;">9/17/2024</span>
<span class="t" style="left:416.0px;top:254.8px;font-size:12px;color:#1a1a1a;letter-spacing:-0.74px;">SQLSRV-03</span>
<span class="t" style="left:518.5px;top:254.8px;font-size:12px;color:#1a1a1a;letter-spacing:-0.34px;">SQL Server Replication</span>
<span class="t" style="left:661.5px;top:254.8px;font-size:12px;color:#1a1a1a;letter-spacing:-0.36px;">Regular</span>
<span class="t" style="left:728.3px;top:254.8px;font-size:12px;color:#1a1a1a;letter-spacing:-0.30px;">Failback</span>
<span class="t" style="left:797.0px;top:254.8px;font-size:12px;color:#1a1a1a;letter-spacing:0.58px;">9/17/2024</span>
<span class="t" style="left:416.0px;top:274.8px;font-size:12px;color:#1a1a1a;letter-spacing:-0.74px;">SQLSRV-04</span>
<span class="t" style="left:518.5px;top:274.8px;font-size:12px;color:#1a1a1a;letter-spacing:-0.34px;">SQL Server Replication</span>
<span class="t" style="left:661.5px;top:274.8px;font-size:12px;color:#1a1a1a;letter-spacing:-0.36px;">Regular</span>
<span class="t" style="left:728.3px;top:274.8px;font-size:12px;color:#1a1a1a;letter-spacing:-0.30px;">Failback</span>
<span class="t" style="left:797.0px;top:274.8px;font-size:12px;color:#1a1a1a;letter-spacing:0.58px;">9/17/2024</span>
<span class="t" style="left:416.0px;top:294.8px;font-size:12px;color:#1a1a1a;letter-spacing:-0.74px;">SQLSRV-05</span>
<span class="t" style="left:518.5px;top:294.8px;font-size:12px;color:#1a1a1a;letter-spacing:-0.34px;">SQL Server Replication</span>
<span class="t" style="left:661.5px;top:294.8px;font-size:12px;color:#1a1a1a;letter-spacing:-0.36px;">Regular</span>
<span class="t" style="left:728.3px;top:294.8px;font-size:12px;color:#1a1a1a;letter-spacing:-0.30px;">Failback</span>
<span class="t" style="left:797.0px;top:294.8px;font-size:12px;color:#1a1a1a;letter-spacing:0.58px;">9/17/2024</span>
<span class="t" style="left:416.0px;top:314.8px;font-size:12px;color:#1a1a1a;letter-spacing:-0.74px;">SQLSRV-06</span>
<span class="t" style="left:518.5px;top:314.8px;font-size:12px;color:#1a1a1a;letter-spacing:-0.34px;">SQL Server Replication</span>
<span class="t" style="left:661.5px;top:314.8px;font-size:12px;color:#1a1a1a;letter-spacing:-0.36px;">Regular</span>
<span class="t" style="left:728.3px;top:314.8px;font-size:12px;color:#1a1a1a;letter-spacing:-0.30px;">Failback</span>
<span class="t" style="left:797.0px;top:314.8px;font-size:12px;color:#1a1a1a;letter-spacing:0.58px;">9/17/2024</span>
<span class="t" style="left:416.0px;top:334.8px;font-size:12px;color:#1a1a1a;letter-spacing:-0.74px;">SQLSRV-07</span>
<span class="t" style="left:518.5px;top:334.8px;font-size:12px;color:#1a1a1a;letter-spacing:-0.34px;">SQL Server Replication</span>
<span class="t" style="left:661.5px;top:334.8px;font-size:12px;color:#1a1a1a;letter-spacing:-0.36px;">Regular</span>
<span class="t" style="left:728.3px;top:334.8px;font-size:12px;color:#1a1a1a;letter-spacing:-0.30px;">Failback</span>
<span class="t" style="left:797.0px;top:334.8px;font-size:12px;color:#1a1a1a;letter-spacing:0.58px;">9/17/2024</span>
<span class="t" style="left:416.0px;top:354.8px;font-size:12px;color:#1a1a1a;letter-spacing:-0.74px;">SQLSRV-08</span>
<span class="t" style="left:518.5px;top:354.8px;font-size:12px;color:#1a1a1a;letter-spacing:-0.34px;">SQL Server Replication</span>
<span class="t" style="left:661.5px;top:354.8px;font-size:12px;color:#1a1a1a;letter-spacing:-0.36px;">Regular</span>
<span class="t" style="left:728.3px;top:354.8px;font-size:12px;color:#1a1a1a;letter-spacing:-0.30px;">Failback</span>
<span class="t" style="left:797.0px;top:354.8px;font-size:12px;color:#1a1a1a;letter-spacing:0.58px;">9/17/2024</span>
<span class="t" style="left:516.3px;top:228.8px;font-size:12px;color:#8b8b8b;letter-spacing:-0.11px;z-index:20;">Failover now...</span>
<span class="t" style="left:516.3px;top:250.8px;font-size:12px;color:#8b8b8b;letter-spacing:-0.13px;z-index:20;">Planned failover...</span>
<span class="t" style="left:516.3px;top:272.8px;font-size:12px;color:#111;letter-spacing:0.02px;z-index:20;">Add to failover plan</span>
<span class="t" style="left:516.3px;top:300.8px;font-size:12px;color:#8b8b8b;letter-spacing:0.00px;z-index:20;">Failback to production...</span>
<span class="t" style="left:516.3px;top:322.8px;font-size:12px;color:#111;letter-spacing:0.16px;z-index:20;">Commit failback</span>
<span class="t" style="left:516.3px;top:344.8px;font-size:12px;color:#111;letter-spacing:-0.02px;z-index:20;">Undo failback</span>
<span class="t" style="left:516.3px;top:372.8px;font-size:12px;color:#8b8b8b;letter-spacing:-0.25px;z-index:20;">Restore guest files</span>
<span class="t" style="left:516.3px;top:401.3px;font-size:12px;color:#8b8b8b;letter-spacing:-0.08px;z-index:20;">Delete from disk</span>
<span class="t" style="left:516.3px;top:428.8px;font-size:12px;color:#8b8b8b;letter-spacing:-0.26px;z-index:20;">Properties...</span>
</body></html>
